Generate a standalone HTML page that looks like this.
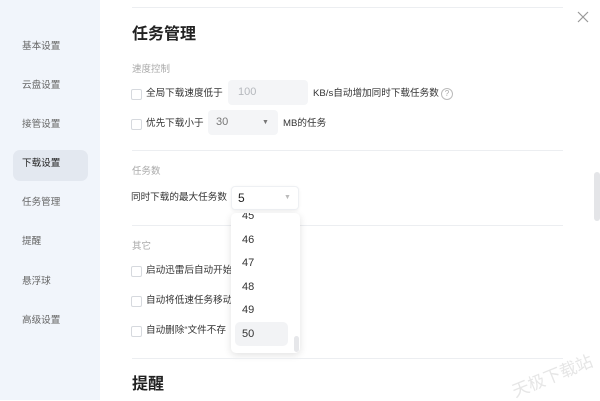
<!DOCTYPE html>
<html><head><meta charset="utf-8"><style>
*{margin:0;padding:0;box-sizing:border-box}
body{width:600px;height:400px;overflow:hidden;background:#fff;font-family:"Liberation Sans","Noto Sans CJK SC",sans-serif;position:relative;color:#333}
.side{position:absolute;left:0;top:0;width:100px;height:400px;background:#f1f5fb}
.side div{position:absolute;left:22px;font-size:9.6px;color:#666;line-height:14px}
.sel{position:absolute;left:13px;top:150px;width:75px;height:31px;background:#e3e8f0;border-radius:7px}
.t{position:absolute;white-space:nowrap;line-height:1}
.line{position:absolute;left:132px;width:431px;height:1px;background:#eceef1}
.cb{position:absolute;left:131px;width:11px;height:11px;border:1px solid #d6d9de;border-radius:2px;background:#fff}
.g{color:#aaa;font-size:9.5px}
.l{font-size:9.6px;color:#333}
.h{font-size:16px;font-weight:bold;color:#222}
.dd div{position:absolute;left:242px;font-size:11px;color:#333;line-height:1}
</style></head><body>
<div class="side">
<div class="sel" style="left:13px"></div>
<div style="top:40px">基本设置</div>
<div style="top:79px">云盘设置</div>
<div style="top:118px">接管设置</div>
<div style="top:157px;color:#222">下载设置</div>
<div style="top:196px">任务管理</div>
<div style="top:235px">提醒</div>
<div style="top:275px">悬浮球</div>
<div style="top:314px">高级设置</div>
</div>
<div class="line" style="top:7px"></div>
<div class="t h" style="left:132px;top:27px">任务管理</div>
<div class="t g" style="left:132px;top:65px">速度控制</div>
<div class="cb" style="top:89px"></div>
<div class="t l" style="left:146px;top:89px">全局下载速度低于</div>
<div style="position:absolute;left:228px;top:80px;width:80px;height:25px;background:#f4f5f7;border-radius:4px"></div>
<div class="t" style="left:238px;top:87px;font-size:11px;color:#b5b8bd">100</div>
<div class="t l" style="left:313px;top:89px">KB/s自动增加同时下载任务数</div>
<div style="position:absolute;left:441px;top:88px;width:12px;height:12px;border:1px solid #bbb;border-radius:50%;font-size:8px;color:#aaa;text-align:center;line-height:10px">?</div>
<div class="cb" style="top:119px"></div>
<div class="t l" style="left:146px;top:119px">优先下载小于</div>
<div style="position:absolute;left:208px;top:110px;width:70px;height:25px;background:#f4f5f7;border-radius:4px"></div>
<div class="t" style="left:216px;top:117px;font-size:11px;color:#777">30</div>
<div class="t" style="left:262px;top:119px;font-size:7px;color:#777">▼</div>
<div class="t l" style="left:283px;top:119px">MB的任务</div>
<div class="line" style="top:150px"></div>
<div class="t g" style="left:132px;top:167px">任务数</div>
<div class="t l" style="left:131px;top:193px">同时下载的最大任务数</div>
<div style="position:absolute;left:231px;top:186px;width:68px;height:24px;background:#fff;border:1px solid #eef0f3;border-radius:4px;box-shadow:0 1px 3px rgba(0,0,0,.06)"></div>
<div class="t" style="left:238px;top:192px;font-size:12px;color:#222">5</div>
<div class="t" style="left:284px;top:194px;font-size:7px;color:#bbb">▼</div>
<div class="line" style="top:225px"></div>
<div class="t g" style="left:132px;top:242px">其它</div>
<div class="cb" style="top:266px"></div>
<div class="t l" style="left:146px;top:266px">启动迅雷后自动开始</div>
<div class="cb" style="top:296px"></div>
<div class="t l" style="left:146px;top:296px">自动将低速任务移动</div>
<div class="cb" style="top:326px"></div>
<div class="t l" style="left:146px;top:326px">自动删除“文件不存</div>
<div class="dd" style="position:absolute;left:231px;top:213px;width:69px;height:140px;background:#fff;border-radius:5px;box-shadow:0 2px 8px rgba(0,0,0,.12);overflow:hidden">
<div style="position:absolute;left:4px;top:109px;width:53px;height:24px;background:#f2f3f5;border-radius:5px"></div>
<div style="position:absolute;left:63px;top:123px;width:5px;height:16px;background:#e6e7ea;border-radius:3px"></div>
<div style="left:11px;top:-2px">45</div>
<div style="left:11px;top:22px">46</div>
<div style="left:11px;top:45px">47</div>
<div style="left:11px;top:69px">48</div>
<div style="left:11px;top:92px">49</div>
<div style="left:11px;top:116px">50</div>
</div>
<div class="line" style="top:358px"></div>
<div class="t h" style="left:132px;top:377px">提醒</div>
<div style="position:absolute;left:594px;top:172px;width:6px;height:49px;background:#e4e5e8;border-radius:3px"></div>
<svg style="position:absolute;left:577px;top:11px" width="12" height="12"><path d="M1 1L11 11M11 1L1 11" stroke="#999" stroke-width="1.2"/></svg>
<div class="t" style="left:510px;top:368px;font-size:17px;color:#e6e6e6;transform:rotate(-22deg)">天极下载站</div>
</body></html>
